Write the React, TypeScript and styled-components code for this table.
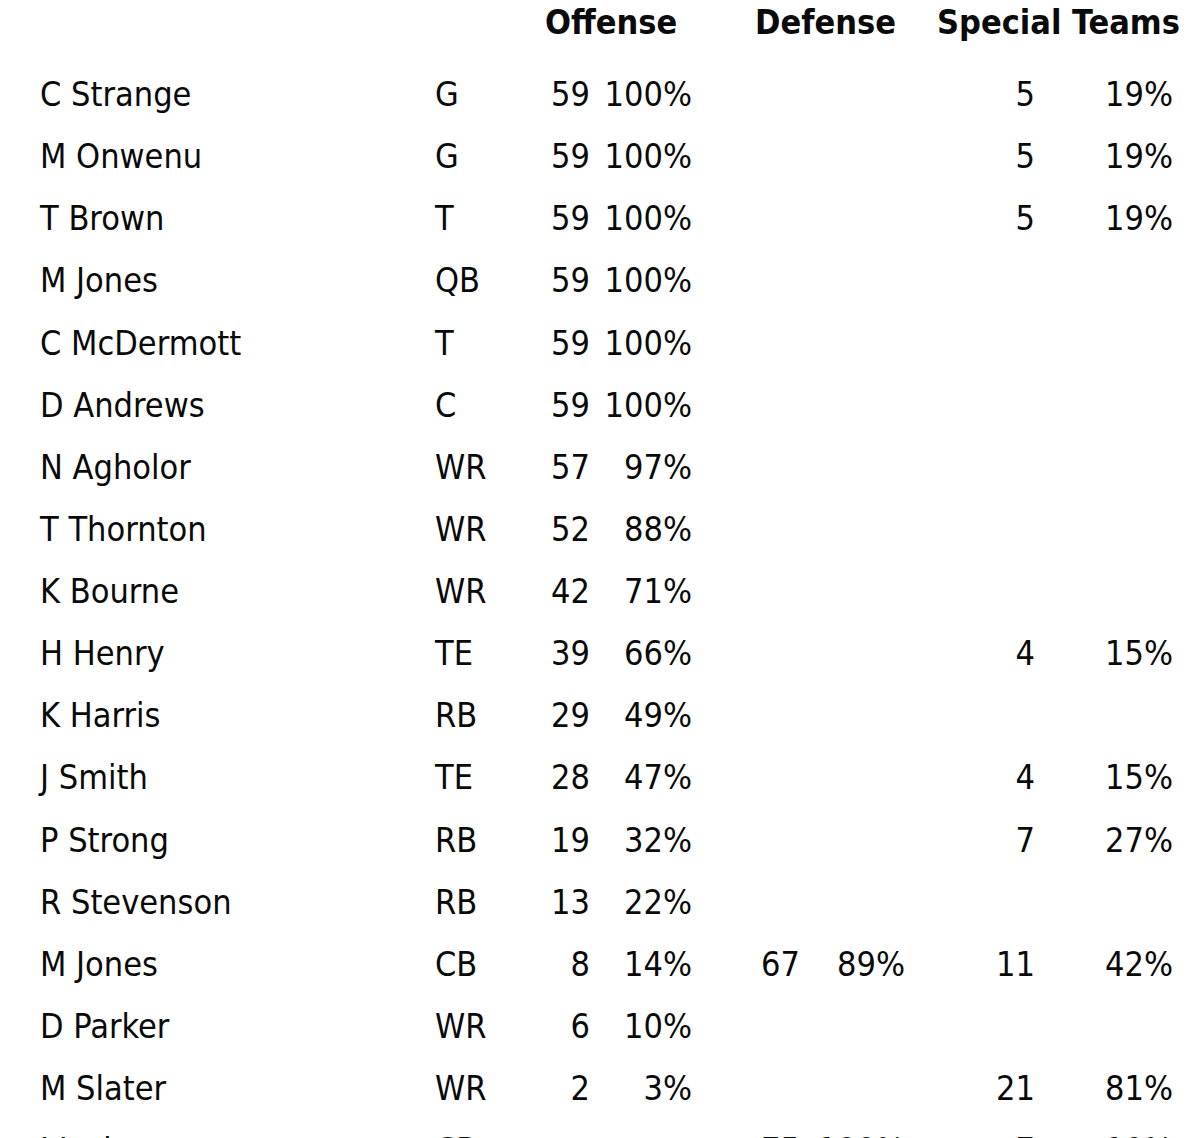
import React from "react";
import styled, { createGlobalStyle } from "styled-components";

const GlobalStyle = createGlobalStyle`
  html, body {
    margin: 0;
    padding: 0;
    background: #ffffff;
  }
  body {
    font-family: "DejaVu Sans Condensed", "DejaVu Sans", "Liberation Sans", sans-serif;
    color: #0a0a0a;
    overflow: hidden;
  }
`;

const COLS = "395px 95px 60px 102px 108px 105px 130px 138px";

const Table = styled.div`
  width: 1200px;
  height: 1138px;
  overflow: hidden;
  padding-left: 40px;
  box-sizing: border-box;
`;

const HeaderRow = styled.div`
  display: grid;
  grid-template-columns: ${COLS};
  height: 44px;
  line-height: 44px;
  margin-bottom: 19px;
  font-size: 34px;
  font-weight: bold;
  white-space: nowrap;
`;

const HeaderCell = styled.div<{ $start: number; $span: number; $indent: number }>`
  grid-column: ${(p) => p.$start} / span ${(p) => p.$span};
  padding-left: ${(p) => p.$indent}px;
`;

const Row = styled.div`
  display: grid;
  grid-template-columns: ${COLS};
  height: 62.125px;
  line-height: 62px;
  font-size: 34px;
  white-space: nowrap;
`;

const Cell = styled.div<{ $num?: boolean }>`
  text-align: ${(p) => (p.$num ? "right" : "left")};
`;

type Player = {
  name: string;
  pos: string;
  off?: [string, string];
  def?: [string, string];
  st?: [string, string];
};

const players: Player[] = [
  { name: "C Strange", pos: "G", off: ["59", "100%"], st: ["5", "19%"] },
  { name: "M Onwenu", pos: "G", off: ["59", "100%"], st: ["5", "19%"] },
  { name: "T Brown", pos: "T", off: ["59", "100%"], st: ["5", "19%"] },
  { name: "M Jones", pos: "QB", off: ["59", "100%"] },
  { name: "C McDermott", pos: "T", off: ["59", "100%"] },
  { name: "D Andrews", pos: "C", off: ["59", "100%"] },
  { name: "N Agholor", pos: "WR", off: ["57", "97%"] },
  { name: "T Thornton", pos: "WR", off: ["52", "88%"] },
  { name: "K Bourne", pos: "WR", off: ["42", "71%"] },
  { name: "H Henry", pos: "TE", off: ["39", "66%"], st: ["4", "15%"] },
  { name: "K Harris", pos: "RB", off: ["29", "49%"] },
  { name: "J Smith", pos: "TE", off: ["28", "47%"], st: ["4", "15%"] },
  { name: "P Strong", pos: "RB", off: ["19", "32%"], st: ["7", "27%"] },
  { name: "R Stevenson", pos: "RB", off: ["13", "22%"] },
  { name: "M Jones", pos: "CB", off: ["8", "14%"], def: ["67", "89%"], st: ["11", "42%"] },
  { name: "D Parker", pos: "WR", off: ["6", "10%"] },
  { name: "M Slater", pos: "WR", off: ["2", "3%"], st: ["21", "81%"] },
  { name: "J Jackson", pos: "CB", def: ["75", "100%"], st: ["7", "10%"] },
];

export default function App() {
  return (
    <>
      <GlobalStyle />
      <Table>
        <HeaderRow>
          <HeaderCell $start={3} $span={2} $indent={15}>Offense</HeaderCell>
          <HeaderCell $start={5} $span={2} $indent={63}>Defense</HeaderCell>
          <HeaderCell $start={7} $span={2} $indent={32}>Special Teams</HeaderCell>
        </HeaderRow>
        {players.map((p, i) => (
          <Row key={i}>
            <Cell>{p.name}</Cell>
            <Cell>{p.pos}</Cell>
            <Cell $num>{p.off?.[0] ?? ""}</Cell>
            <Cell $num>{p.off?.[1] ?? ""}</Cell>
            <Cell $num>{p.def?.[0] ?? ""}</Cell>
            <Cell $num>{p.def?.[1] ?? ""}</Cell>
            <Cell $num>{p.st?.[0] ?? ""}</Cell>
            <Cell $num>{p.st?.[1] ?? ""}</Cell>
          </Row>
        ))}
      </Table>
    </>
  );
}
